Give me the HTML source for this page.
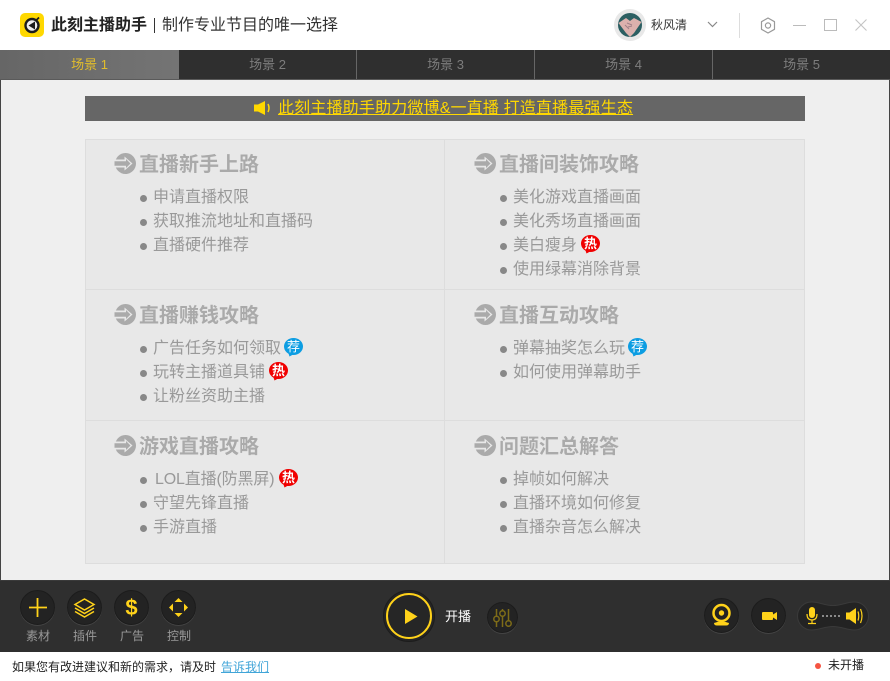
<!DOCTYPE html>
<html><head><meta charset="utf-8">
<style>
*{margin:0;padding:0;box-sizing:border-box}
html,body{width:890px;height:681px;overflow:hidden;background:#fff}
body{position:relative;font-family:"Liberation Sans","Noto Sans CJK SC","WenQuanYi Zen Hei",sans-serif}
.a{position:absolute;white-space:nowrap}
svg{position:absolute;overflow:visible}
.tab{position:absolute;top:50px;height:29px;background:#2f2f2f;color:#7d7d7d;font-size:13px;line-height:29px;text-align:center;border-left:1px solid #666}
.h{position:absolute;font-size:20px;font-weight:bold;color:#aaa;line-height:26px;white-space:nowrap;margin-top:1px}
.i{position:absolute;font-size:16px;color:#999;line-height:22px;white-space:nowrap;margin-top:1px}
.d{position:absolute;width:7px;height:7px;border-radius:50%;background:#888;margin-top:2px}
.c{position:absolute;border-radius:50%;background:#232323;border:1px solid #1c1c1c;box-shadow:0 1px 0 #444}
.l{position:absolute;top:628px;font-size:12px;line-height:16px;color:#999;text-align:center;width:36px}
</style></head><body>

<!-- title bar -->
<div class="a" style="left:20px;top:13px;width:24px;height:24px;background:#ffd800;border-radius:5px"></div>
<svg style="left:20px;top:13px" width="24" height="24" viewBox="0 0 24 24"><circle cx="12" cy="12.500" r="6.500" fill="#eee" stroke="#1c1c1c" stroke-width="2.400"/><path d="M16.500 7l2.500-2.500" stroke="#1c1c1c" stroke-width="1.800"/><path d="M8.500 12.500L15 8.500v8z" fill="#1c1c1c"/></svg>
<div class="a" style="left:51px;top:15px;font-size:16px;font-weight:bold;color:#222;line-height:22px">此刻主播助手</div>
<div class="a" style="left:154px;top:18px;width:1px;height:15px;background:#333"></div>
<div class="a" style="left:162px;top:15px;font-size:16px;color:#333;line-height:22px">制作专业节目的唯一选择</div>

<div class="a" style="left:614px;top:9px;width:32px;height:32px;border-radius:50%;background:#e8e8e8"></div>
<div class="a" style="left:618px;top:13px;width:24px;height:24px;border-radius:50%;background:#2c5f62"></div>
<svg style="left:618px;top:13px" width="24" height="24" viewBox="0 0 24 24"><path d="M.5 10L8 5l4 3 4-3 7.500 4-7.500 11-4 4-4-4z" fill="#dcb1ad"/><path d="M9 10l5 2M10 14l4-1M7 12l4 4" stroke="#a08088" fill="none"/></svg>
<div class="a" style="left:651px;top:16px;font-size:12px;color:#333;line-height:18px">秋风清</div>
<svg style="left:707px;top:21px" width="11" height="7" viewBox="0 0 11 7"><path d="M1 1l4.500 4.500L10 1" fill="none" stroke="#888" stroke-width="1.200"/></svg>
<div class="a" style="left:739px;top:13px;width:1px;height:25px;background:#ddd"></div>
<svg style="left:760px;top:17px" width="16" height="17" viewBox="0 0 16 17"><path d="M8 1l6.500 3.700v7.600L8 16l-6.500-3.700V4.700z" fill="none" stroke="#999" stroke-width="1.200" stroke-linejoin="round"/><circle cx="8" cy="8.500" r="2.600" fill="none" stroke="#999" stroke-width="1.200"/></svg>
<div class="a" style="left:793px;top:25px;width:13px;height:1px;background:#bbb"></div>
<div class="a" style="left:824px;top:19px;width:13px;height:12px;border:1px solid #bbb"></div>
<svg style="left:855px;top:19px" width="12" height="12" viewBox="0 0 12 12"><path d="M.5.500l11 11M11.500.500l-11 11" stroke="#c4c4c4" stroke-width="1.100"/></svg>

<!-- tabs -->
<div class="tab" style="left:0;width:179px;background:linear-gradient(90deg,#666,#747474);color:#e2bd2c;border:0">场景 1</div>
<div class="tab" style="left:179px;width:177px;border:0">场景 2</div>
<div class="tab" style="left:356px;width:178px">场景 3</div>
<div class="tab" style="left:534px;width:178px">场景 4</div>
<div class="tab" style="left:712px;width:178px">场景 5</div>
<div class="a" style="left:0;top:79px;width:890px;height:1px;background:#5a5a5a"></div>

<!-- main -->
<div class="a" style="left:0;top:80px;width:890px;height:500px;background:#efefef;border-left:1px solid #444;border-right:1px solid #444"></div>
<div class="a" style="left:85px;top:96px;width:720px;height:25px;background:#666"></div>
<svg style="left:254px;top:101px" width="18" height="14" viewBox="0 0 18 14"><path d="M0 3.500h4L11 0v14L4 10.500H0z" fill="#ffd800"/><path d="M14 3q2 4 0 8" fill="none" stroke="#ffd800" stroke-width="1.500"/></svg>
<div class="a" style="left:278px;top:98px;font-size:16px;letter-spacing:.17px;line-height:21px;color:#ffd800;text-decoration:underline">此刻主播助手助力微博&amp;一直播 打造直播最强生态</div>

<div class="a" style="left:85px;top:139px;width:720px;height:425px;background:#e8e8e8;border:1px solid #ddd"></div>
<div class="a" style="left:444px;top:140px;width:1px;height:423px;background:#ddd"></div>
<div class="a" style="left:86px;top:289px;width:718px;height:1px;background:#ddd"></div>
<div class="a" style="left:86px;top:420px;width:718px;height:1px;background:#ddd"></div>

<!-- arrow icons -->
<svg width="0" height="0" style="left:0;top:0"><defs><g id="ar"><circle cx="10.500" cy="10.500" r="10.500" fill="#aaa"/><path d="M-1 6.500H9.500V3.500L17.500 10.500 9.500 17.500V14.500H-1z" fill="#e8e8e8"/><path d="M-.5 8.300H11V6l4.500 4.500L11 15V12.700H-.5z" fill="#aaa"/></g></defs></svg>
<svg style="left:115px;top:153px" width="21" height="21"><use href="#ar"/></svg>
<svg style="left:475px;top:153px" width="21" height="21"><use href="#ar"/></svg>
<svg style="left:115px;top:304px" width="21" height="21"><use href="#ar"/></svg>
<svg style="left:475px;top:304px" width="21" height="21"><use href="#ar"/></svg>
<svg style="left:115px;top:435px" width="21" height="21"><use href="#ar"/></svg>
<svg style="left:475px;top:435px" width="21" height="21"><use href="#ar"/></svg>

<div class="h" style="left:139px;top:151px">直播新手上路</div>
<div class="d" style="left:140px;top:193px"></div><div class="i" style="left:153px;top:186px">申请直播权限</div>
<div class="d" style="left:140px;top:217px"></div><div class="i" style="left:153px;top:210px">获取推流地址和直播码</div>
<div class="d" style="left:140px;top:241px"></div><div class="i" style="left:153px;top:234px">直播硬件推荐</div>

<div class="h" style="left:499px;top:151px">直播间装饰攻略</div>
<div class="d" style="left:500px;top:193px"></div><div class="i" style="left:513px;top:186px">美化游戏直播画面</div>
<div class="d" style="left:500px;top:217px"></div><div class="i" style="left:513px;top:210px">美化秀场直播画面</div>
<div class="d" style="left:500px;top:241px"></div><div class="i" style="left:513px;top:234px">美白瘦身</div>
<div class="d" style="left:500px;top:265px"></div><div class="i" style="left:513px;top:258px">使用绿幕消除背景</div>

<div class="h" style="left:139px;top:302px">直播赚钱攻略</div>
<div class="d" style="left:140px;top:344px"></div><div class="i" style="left:153px;top:337px">广告任务如何领取</div>
<div class="d" style="left:140px;top:368px"></div><div class="i" style="left:153px;top:361px">玩转主播道具铺</div>
<div class="d" style="left:140px;top:392px"></div><div class="i" style="left:153px;top:385px">让粉丝资助主播</div>

<div class="h" style="left:499px;top:302px">直播互动攻略</div>
<div class="d" style="left:500px;top:344px"></div><div class="i" style="left:513px;top:337px">弹幕抽奖怎么玩</div>
<div class="d" style="left:500px;top:368px"></div><div class="i" style="left:513px;top:361px">如何使用弹幕助手</div>

<div class="h" style="left:139px;top:433px">游戏直播攻略</div>
<div class="d" style="left:140px;top:475px"></div><div class="i" style="left:155px;top:468px;letter-spacing:-.15px">LOL直播(防黑屏)</div>
<div class="d" style="left:140px;top:499px"></div><div class="i" style="left:153px;top:492px">守望先锋直播</div>
<div class="d" style="left:140px;top:523px"></div><div class="i" style="left:153px;top:516px">手游直播</div>

<div class="h" style="left:499px;top:433px">问题汇总解答</div>
<div class="d" style="left:500px;top:475px"></div><div class="i" style="left:513px;top:468px">掉帧如何解决</div>
<div class="d" style="left:500px;top:499px"></div><div class="i" style="left:513px;top:492px">直播环境如何修复</div>
<div class="d" style="left:500px;top:523px"></div><div class="i" style="left:513px;top:516px">直播杂音怎么解决</div>

<!-- badges -->
<svg style="left:581px;top:235px" width="20" height="19" viewBox="0 0 20 19"><ellipse cx="9.500" cy="8.500" rx="9.500" ry="8.500" fill="#f00000"/><path d="M4 14l1.500 4.500L10 16z" fill="#f00000"/><text x="9.500" y="13" font-size="13" font-weight="bold" fill="#fff" text-anchor="middle" font-family="Noto Sans CJK SC,sans-serif">热</text></svg>
<svg style="left:269px;top:362px" width="20" height="19" viewBox="0 0 20 19"><ellipse cx="9.500" cy="8.500" rx="9.500" ry="8.500" fill="#f00000"/><path d="M4 14l1.500 4.500L10 16z" fill="#f00000"/><text x="9.500" y="13" font-size="13" font-weight="bold" fill="#fff" text-anchor="middle" font-family="Noto Sans CJK SC,sans-serif">热</text></svg>
<svg style="left:279px;top:469px" width="20" height="19" viewBox="0 0 20 19"><ellipse cx="9.500" cy="8.500" rx="9.500" ry="8.500" fill="#f00000"/><path d="M4 14l1.500 4.500L10 16z" fill="#f00000"/><text x="9.500" y="13" font-size="13" font-weight="bold" fill="#fff" text-anchor="middle" font-family="Noto Sans CJK SC,sans-serif">热</text></svg>
<svg style="left:284px;top:338px" width="20" height="19" viewBox="0 0 20 19"><ellipse cx="9.500" cy="8.500" rx="9.500" ry="8.500" fill="#0c9de2"/><path d="M4 14l1.500 4.500L10 16z" fill="#0c9de2"/><text x="9.500" y="13" font-size="13" fill="#fff" text-anchor="middle" font-family="Noto Sans CJK SC,sans-serif">荐</text></svg>
<svg style="left:628px;top:338px" width="20" height="19" viewBox="0 0 20 19"><ellipse cx="9.500" cy="8.500" rx="9.500" ry="8.500" fill="#0c9de2"/><path d="M4 14l1.500 4.500L10 16z" fill="#0c9de2"/><text x="9.500" y="13" font-size="13" fill="#fff" text-anchor="middle" font-family="Noto Sans CJK SC,sans-serif">荐</text></svg>

<!-- bottom bar -->
<div class="a" style="left:0;top:580px;width:890px;height:72px;background:#2f2f2f;border-top:1px solid #3a3a3a"></div>

<div class="c" style="left:20px;top:590px;width:35px;height:35px"></div>
<svg style="left:20px;top:590px" width="35" height="35"><path d="M17.500 8v19M9 17.500h18" stroke="#ffd21a" stroke-width="1.800"/></svg>
<div class="c" style="left:67px;top:590px;width:35px;height:35px"></div>
<svg style="left:67px;top:590px" width="35" height="35"><path d="M17.500 9l9.500 5.500-9.500 5.500-9.500-5.500z" fill="none" stroke="#ffd21a" stroke-width="1.500"/><path d="M8 18l9.500 5.500L27 18M8 21.500l9.500 5.500L27 21.500" fill="none" stroke="#ffd21a" stroke-width="1.500"/></svg>
<div class="c" style="left:114px;top:590px;width:35px;height:35px"></div>
<div class="a" style="left:114px;top:590px;width:35px;text-align:center;font-size:22px;line-height:35px;font-weight:bold;color:#ffd21a">$</div>
<div class="c" style="left:161px;top:590px;width:35px;height:35px"></div>
<svg style="left:161px;top:590px" width="35" height="35"><path d="M17.500 8l4 4h-8zM17.500 27l4-4h-8zM8 17.500l4-4v8zM27 17.500l-4-4v8z" fill="#ffd21a"/></svg>
<div class="l" style="left:20px">素材</div>
<div class="l" style="left:67px">插件</div>
<div class="l" style="left:114px">广告</div>
<div class="l" style="left:161px">控制</div>

<div class="a" style="left:383px;top:590px;width:52px;height:52px;border-radius:50%;background:#252525;border:1px solid #1c1c1c"></div>
<div class="a" style="left:386px;top:593px;width:46px;height:46px;border-radius:50%;background:#262626;border:2.500px solid #ffd21a"></div>
<svg style="left:404px;top:608px" width="14" height="17"><path d="M1 1l12.500 7.500L1 16z" fill="#ffd21a"/></svg>
<div class="a" style="left:445px;top:608px;font-size:13px;line-height:18px;color:#fff">开播</div>
<div class="c" style="left:487px;top:602px;width:31px;height:31px"></div>
<svg style="left:487px;top:602px" width="31" height="31" fill="none" stroke="#7e6c18" stroke-width="1.500"><path d="M9.500 7v7.500M9.500 20v5M15.500 7v2M15.500 14v11M21.500 7v12M21.500 24v1"/><circle cx="9.500" cy="17" r="2.700"/><circle cx="15.500" cy="11.500" r="2.700"/><circle cx="21.500" cy="21.500" r="2.700"/></svg>

<div class="c" style="left:704px;top:598px;width:35px;height:35px"></div>
<svg style="left:704px;top:598px" width="35" height="35"><circle cx="17.500" cy="15" r="8" fill="none" stroke="#ffd21a" stroke-width="2.500"/><circle cx="17.500" cy="15" r="2.700" fill="#ffd21a"/><path d="M10 25q7.500-3 15 0q0 2.500-3 2.500h-9q-3 0-3-2.500z" fill="#ffd21a"/></svg>
<div class="c" style="left:751px;top:598px;width:35px;height:35px"></div>
<svg style="left:751px;top:598px" width="35" height="35"><rect x="11" y="14" width="11" height="8" rx="1" fill="#ffd21a"/><path d="M22 16.500l4-2.500v8l-4-2.500z" fill="#ffd21a"/></svg>

<svg style="left:797px;top:601px" width="72" height="30" viewBox="0 0 72 30"><path d="M14.500 1C23 1 27 4.500 36 4.500S49 1 57.500 1a14 14 0 0 1 0 28C49 29 45 25.500 36 25.500S23 29 14.500 29a14 14 0 0 1 0-28z" fill="#232323" stroke="#3a3a3a"/><rect x="12" y="6" width="6" height="11" rx="3" fill="#ffd21a"/><path d="M10 13q0 6 5 6t5-6M15 19v3M11 22.500h8" fill="none" stroke="#ffd21a" stroke-width="1.200"/><path d="M25 15h18" stroke="#8a8a8a" stroke-width="2" stroke-dasharray="2 2"/><path d="M49 11.500h3.500L59 7v16l-6.500-4.500H49z" fill="#ffd21a"/><path d="M61 10.500q1.500 4.500 0 9M63.500 8q3 7 0 14" fill="none" stroke="#ffd21a" stroke-width="1.200"/></svg>

<!-- status bar -->
<div class="a" style="left:12px;top:659px;font-size:12px;line-height:17px;color:#222">如果您有改进建议和新的需求，请及时</div>
<div class="a" style="left:221px;top:659px;font-size:12px;line-height:17px;color:#41a5d8;text-decoration:underline">告诉我们</div>
<div class="a" style="left:815px;top:663px;width:6px;height:6px;border-radius:50%;background:#f55442"></div>
<div class="a" style="left:828px;top:657px;font-size:12px;line-height:17px;color:#222">未开播</div>
</body></html>
